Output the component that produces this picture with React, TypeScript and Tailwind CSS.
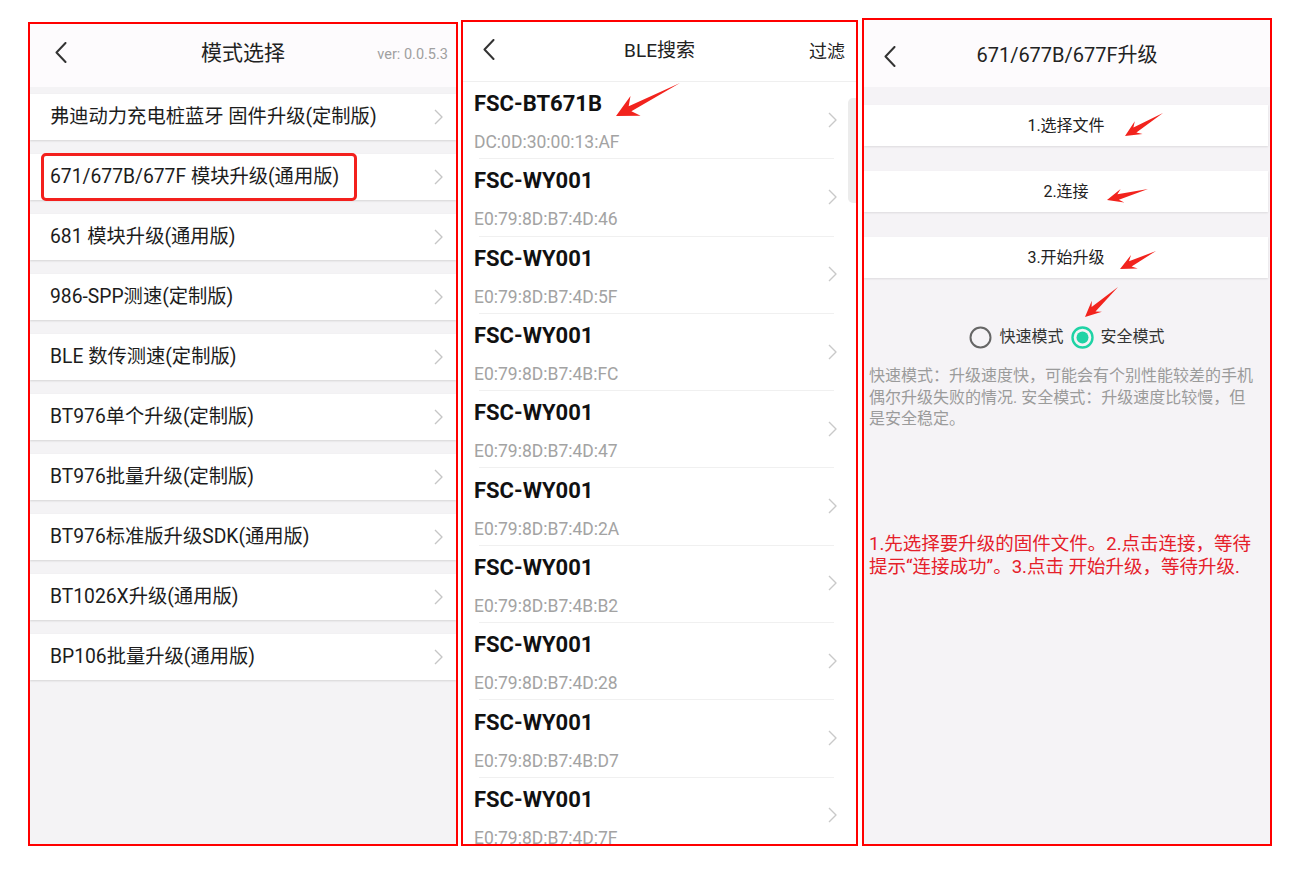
import React from 'react';

const modes = [
  '弗迪动力充电桩蓝牙 固件升级(定制版)',
  '671/677B/677F 模块升级(通用版)',
  '681 模块升级(通用版)',
  '986-SPP测速(定制版)',
  'BLE 数传测速(定制版)',
  'BT976单个升级(定制版)',
  'BT976批量升级(定制版)',
  'BT976标准版升级SDK(通用版)',
  'BT1026X升级(通用版)',
  'BP106批量升级(通用版)',
];

const devices = [
  ['FSC-BT671B', 'DC:0D:30:00:13:AF'],
  ['FSC-WY001', 'E0:79:8D:B7:4D:46'],
  ['FSC-WY001', 'E0:79:8D:B7:4D:5F'],
  ['FSC-WY001', 'E0:79:8D:B7:4B:FC'],
  ['FSC-WY001', 'E0:79:8D:B7:4D:47'],
  ['FSC-WY001', 'E0:79:8D:B7:4D:2A'],
  ['FSC-WY001', 'E0:79:8D:B7:4B:B2'],
  ['FSC-WY001', 'E0:79:8D:B7:4D:28'],
  ['FSC-WY001', 'E0:79:8D:B7:4B:D7'],
  ['FSC-WY001', 'E0:79:8D:B7:4D:7F'],
];

// tail -> tip, head length, head half width
const arrows: [number, number, number, number, number, number][] = [
  [680, 83, 616, 116, 22, 11],
  [1163, 113, 1125, 136, 16, 7.5],
  [1148, 189, 1107, 200, 16, 7],
  [1156, 251, 1120, 269, 16, 7.5],
  [1118, 287, 1085, 317, 16, 7.5],
];

function arrowPoints([tx, ty, px, py, h, w]: [number, number, number, number, number, number]) {
  const dx = px - tx;
  const dy = py - ty;
  const len = Math.hypot(dx, dy);
  const ux = dx / len;
  const uy = dy / len;
  const nx = -uy;
  const ny = ux;
  const neck = 2.9;
  const bx = px - ux * h;
  const by = py - uy * h;
  const kx = px - ux * h * 0.72;
  const ky = py - uy * h * 0.72;
  const pts = [
    [tx, ty],
    [kx + nx * neck, ky + ny * neck],
    [bx + nx * w, by + ny * w],
    [px, py],
    [bx - nx * w, by - ny * w],
    [kx - nx * neck, ky - ny * neck],
  ];
  return pts.map((p) => p.map((v) => v.toFixed(1)).join(',')).join(' ');
}

function Back() {
  return (
    <svg width="12" height="21" viewBox="0 0 12 21" fill="none">
      <polyline points="10.5,1 1.5,10.5 10.5,20" stroke="#333" strokeWidth="2" strokeLinecap="round" strokeLinejoin="round" />
    </svg>
  );
}

function Chevron({ color = '#c6c6c6' }: { color?: string }) {
  return (
    <svg width="9" height="16" viewBox="0 0 9 16" fill="none">
      <polyline points="1,1 8,8 1,15" stroke={color} strokeWidth="1.4" strokeLinejoin="round" />
    </svg>
  );
}

function Radio({ checked }: { checked?: boolean }) {
  return checked ? (
    <svg width="23" height="23" viewBox="0 0 23 23">
      <circle cx="11.5" cy="11.5" r="10" fill="none" stroke="#1fd3a5" strokeWidth="2.4" />
      <circle cx="11.5" cy="11.5" r="6" fill="#1fd3a5" />
    </svg>
  ) : (
    <svg width="23" height="23" viewBox="0 0 23 23">
      <circle cx="11.5" cy="11.5" r="10" fill="none" stroke="#666" strokeWidth="2" />
    </svg>
  );
}

export default function App() {
  return (
    <div className="relative w-[1309px] h-[876px] bg-white flex items-start font-[Roboto,'Noto_Sans_CJK_SC',sans-serif] overflow-hidden">
      {/* 模式选择 */}
      <div className="ml-[28px] mt-[22px] w-[430px] h-[824px] border-2 border-[#ff0000] bg-[#f4f3f5] flex flex-col overflow-hidden">
        <div className="relative h-[63px] shrink-0 bg-[#fdfbfd] flex items-center justify-center pb-[4px]">
          <div className="absolute left-[25px] top-[18px]">
            <Back />
          </div>
          <span className="text-[21px] text-[#222]">模式选择</span>
          <span className="absolute right-[8px] top-[20px] text-[14.5px] text-[#a0a0a0]">ver: 0.0.5.3</span>
        </div>
        <div className="flex flex-col gap-[14px] pt-[7px]">
          {modes.map((m, i) => (
            <div
              key={i}
              className="relative h-[46px] bg-white flex items-center justify-between pl-[20px] pr-[13px] shadow-[0_1px_2px_rgba(0,0,0,0.13)]"
            >
              <span className="text-[19.3px] text-[#1c1c1c]">{m}</span>
              <Chevron />
              {i === 1 && (
                <div className="absolute left-[11px] -top-[1px] w-[316px] h-[48px] border-[3px] border-[#f3201d] rounded-[5px]" />
              )}
            </div>
          ))}
        </div>
      </div>

      {/* BLE搜索 */}
      <div className="relative ml-[3px] mt-[20px] w-[397px] h-[826px] border-2 border-[#ff0000] bg-white flex flex-col overflow-hidden">
        <div className="relative h-[60px] shrink-0 border-b border-[#efefef] flex items-center justify-center">
          <div className="absolute left-[20px] top-[17px]">
            <Back />
          </div>
          <span className="text-[19px] text-[#222]">BLE搜索</span>
          <span className="absolute right-[11px] top-[16px] text-[18px] text-[#222]">过滤</span>
        </div>
        <div className="flex flex-col">
          {devices.map(([name, mac], i) => (
            <div key={i} className="ml-[16px] mr-[22px] h-[77.3px] shrink-0 border-b border-[#f0f0f0] flex items-center justify-between">
              <div className="-ml-[5px] flex flex-col pt-[3px]">
                <span className="text-[22px] leading-[26px] font-bold text-[#111]">{name}</span>
                <span className="mt-[15px] text-[17.5px] leading-[20px] text-[#a3a3a3]">{mac}</span>
              </div>
              <div className="-mr-[3px] mb-[1px]">
                <Chevron color="#c9c9c9" />
              </div>
            </div>
          ))}
        </div>
        <div className="absolute right-0 top-[76px] w-[8px] h-[105px] rounded-l-[5px] bg-[#ececec]" />
      </div>

      {/* 升级 */}
      <div className="ml-[4px] mt-[18px] w-[410px] h-[828px] border-2 border-[#ff0000] bg-[#f5f3f6] flex flex-col overflow-hidden">
        <div className="relative h-[67px] shrink-0 bg-[#fdfbfd] flex items-center justify-center pt-[3px]">
          <div className="absolute left-[20px] top-[26px]">
            <Back />
          </div>
          <span className="text-[20px] text-[#222]">671/677B/677F升级</span>
        </div>
        <div className="flex flex-col gap-[25px] pt-[18px] mr-[2px]">
          {['1.选择文件', '2.连接', '3.开始升级'].map((b) => (
            <div key={b} className="h-[41px] bg-white flex items-center justify-center text-[16px] text-[#222] shadow-[0_1px_2px_rgba(0,0,0,0.1)]">
              {b}
            </div>
          ))}
        </div>
        <div className="mt-[47px] flex items-center justify-center gap-[7px] text-[16px] text-[#333]">
          <Radio />
          <span>快速模式</span>
          <Radio checked />
          <span>安全模式</span>
        </div>
        <p className="mt-[16px] px-[5px] text-[16px] leading-[21.5px] text-[#9b9b9b]">
          快速模式：升级速度快，可能会有个别性能较差的手机
          <br />
          偶尔升级失败的情况. 安全模式：升级速度比较慢，但
          <br />
          是安全稳定。
        </p>
        <p className="mt-[103px] px-[5px] text-[18.5px] leading-[23px] text-[#e5202a] whitespace-nowrap">
          1.先选择要升级的固件文件。2.点击连接，等待
          <br />
          提示“连接成功”。3.点击 开始升级，等待升级.
        </p>
      </div>

      {/* 标注箭头 */}
      <svg className="absolute left-0 top-0 pointer-events-none" width="1309" height="876">
        {arrows.map((a, i) => (
          <polygon key={i} points={arrowPoints(a)} fill="#f2231d" />
        ))}
      </svg>
    </div>
  );
}
